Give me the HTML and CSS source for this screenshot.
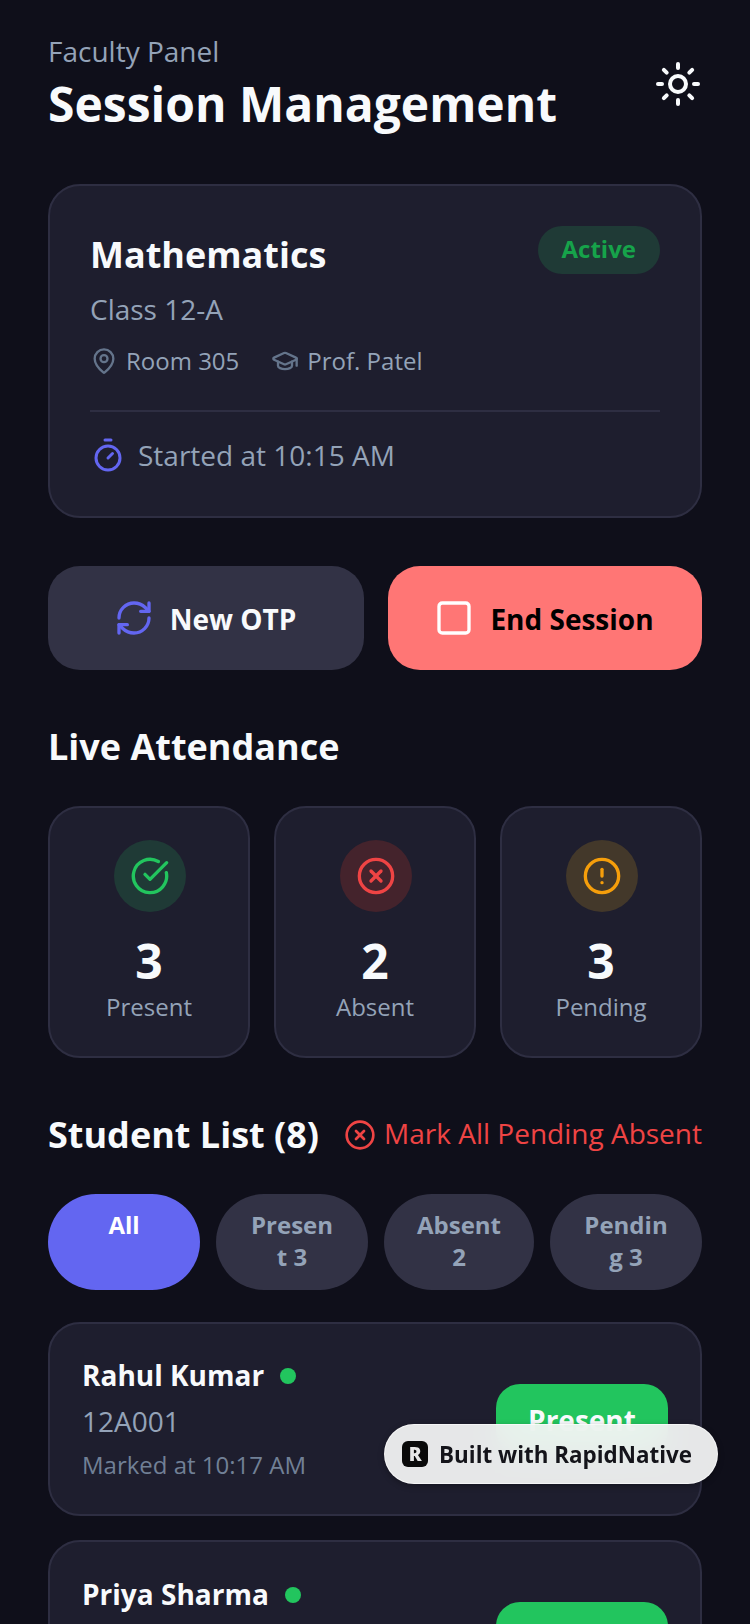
FILE: index.html
```html
<!DOCTYPE html>
<html lang="en">
    <head>
        <meta charset="UTF-8">
        <meta name="viewport" content="width=device-width, initial-scale=1.0">
        <title>Session Management</title>
        <link rel="stylesheet" href="styles.css">
    </head>
    <body>
        <div id="container">
            <div class="header">
                <div>
                    <div class="eyebrow">Faculty Panel</div>
                    <h1 class="title">Session Management</h1>
                </div>
                <svg class="icon sun" viewBox="0 0 24 24"><circle cx="12" cy="12" r="4"/><path d="M12 2v2"/><path d="M12 20v2"/><path d="m4.93 4.93 1.41 1.41"/><path d="m17.66 17.66 1.41 1.41"/><path d="M2 12h2"/><path d="M20 12h2"/><path d="m6.34 17.66-1.41 1.41"/><path d="m19.07 4.93-1.41 1.41"/></svg>
            </div>

            <div class="card session">
                <div class="session_top">
                    <div class="subject">Mathematics</div>
                    <div class="active_tag">Active</div>
                </div>
                <div class="class_name">Class 12-A</div>
                <div class="meta">
                    <div class="meta_item">
                        <svg class="icon meta_icon" viewBox="0 0 24 24"><path d="M20 10c0 4.993-5.539 10.193-7.399 11.799a1 1 0 0 1-1.202 0C9.539 20.193 4 14.993 4 10a8 8 0 0 1 16 0"/><circle cx="12" cy="10" r="3"/></svg>
                        <span>Room 305</span>
                    </div>
                    <div class="meta_item">
                        <svg class="icon meta_icon" viewBox="0 0 24 24"><path d="M21.42 10.922a1 1 0 0 0-.019-1.838L12.83 5.18a2 2 0 0 0-1.66 0L2.6 9.08a1 1 0 0 0 0 1.832l8.57 3.908a2 2 0 0 0 1.66 0z"/><path d="M22 10v6"/><path d="M6 12.5V16a6 3 0 0 0 12 0v-3.5"/></svg>
                        <span>Prof. Patel</span>
                    </div>
                </div>
                <div class="started">
                    <svg class="icon timer" viewBox="0 0 24 24"><path d="M10 2h4"/><path d="m12 14 3-3"/><circle cx="12" cy="14" r="8"/></svg>
                    <span>Started at 10:15 AM</span>
                </div>
            </div>

            <div class="actions">
                <div class="action otp">
                    <svg class="icon" viewBox="0 0 24 24"><path d="M3 12a9 9 0 0 1 9-9 9.75 9.75 0 0 1 6.74 2.74L21 8"/><path d="M21 3v5h-5"/><path d="M21 12a9 9 0 0 1-9 9 9.75 9.75 0 0 1-6.74-2.74L3 16"/><path d="M8 16H3v5"/></svg>
                    <span>New OTP</span>
                </div>
                <div class="action end">
                    <svg class="icon" viewBox="0 0 24 24"><rect x="3" y="3" width="18" height="18" rx="2"/></svg>
                    <span>End Session</span>
                </div>
            </div>

            <h2 class="section_title live">Live Attendance</h2>
            <div class="stats">
                <div class="card stat">
                    <div class="stat_circle green_bg">
                        <svg class="icon green" viewBox="0 0 24 24"><path d="M21.801 10A10 10 0 1 1 17 3.335"/><path d="m9 11 3 3L22 4"/></svg>
                    </div>
                    <div class="stat_num">3</div>
                    <div class="stat_label">Present</div>
                </div>
                <div class="card stat">
                    <div class="stat_circle red_bg">
                        <svg class="icon red" viewBox="0 0 24 24"><circle cx="12" cy="12" r="10"/><path d="m15 9-6 6"/><path d="m9 9 6 6"/></svg>
                    </div>
                    <div class="stat_num">2</div>
                    <div class="stat_label">Absent</div>
                </div>
                <div class="card stat">
                    <div class="stat_circle amber_bg">
                        <svg class="icon amber" viewBox="0 0 24 24"><circle cx="12" cy="12" r="10"/><path d="M12 8v4"/><path d="M12 16h.01"/></svg>
                    </div>
                    <div class="stat_num">3</div>
                    <div class="stat_label">Pending</div>
                </div>
            </div>

            <div class="list_head">
                <h2 class="section_title">Student List (8)</h2>
                <div class="mark_all">
                    <svg class="icon red" viewBox="0 0 24 24"><circle cx="12" cy="12" r="10"/><path d="m15 9-6 6"/><path d="m9 9 6 6"/></svg>
                    <span>Mark All Pending Absent</span>
                </div>
            </div>

            <div class="chips">
                <div class="chip chip_on">All</div>
                <div class="chip">Presen<br>t 3</div>
                <div class="chip">Absent<br>2</div>
                <div class="chip">Pendin<br>g 3</div>
            </div>

            <div class="card student">
                <div class="student_info">
                    <div class="student_name"><span>Rahul Kumar</span><i class="dot"></i></div>
                    <div class="roll">12A001</div>
                    <div class="marked">Marked at 10:17 AM</div>
                </div>
                <div class="status_btn">Present</div>
            </div>
            <div class="card student">
                <div class="student_info">
                    <div class="student_name"><span>Priya Sharma</span><i class="dot"></i></div>
                </div>
                <div class="status_btn">Present</div>
            </div>
        </div>

        <div class="built">
            <span class="built_logo">R</span>
            <span>Built with RapidNative</span>
        </div>
    </body>
</html>
```

FILE: styles.css
```css
html, body {
    margin: 0;
    height: 1624px;
    overflow: hidden;
}
body {
    background: #0f0f1a;
    color: #f8fafc;
    font-family: "Open Sans", sans-serif;
}
#container {
    padding: 31px 48px 0;
}
h1, h2 {
    margin: 0;
}
.icon {
    width: 40px;
    height: 40px;
    fill: none;
    stroke: currentColor;
    stroke-width: 2;
    stroke-linecap: round;
    stroke-linejoin: round;
    flex-shrink: 0;
}

.header {
    display: flex;
    justify-content: space-between;
    align-items: center;
}
.eyebrow {
    font-size: 28px;
    line-height: 40px;
    color: #94a3b8;
}
.title {
    font-size: 48px;
    line-height: 64px;
    font-weight: 700;
    margin-top: 1px;
}
.sun {
    width: 48px;
    height: 48px;
}

.card {
    background: #1e1e2e;
    border: 2px solid #2e2e42;
    box-sizing: border-box;
}
.session {
    margin-top: 48px;
    height: 334px;
    border-radius: 32px;
    padding: 38px 40px 0;
}
.session_top {
    display: flex;
    justify-content: space-between;
    align-items: flex-start;
}
.subject {
    font-size: 36px;
    line-height: 56px;
    font-weight: 700;
    margin-top: 3px;
}
.active_tag {
    background: #1f3a36;
    color: #16a34a;
    font-size: 24px;
    line-height: 32px;
    font-weight: 700;
    padding: 7px 24px 9px;
    margin-top: 2px;
    border-radius: 24px;
}
.class_name {
    font-size: 28px;
    line-height: 40px;
    color: #94a3b8;
    margin-top: 6px;
}
.meta {
    display: flex;
    gap: 32px;
    margin-top: 12px;
}
.meta_item {
    display: flex;
    align-items: center;
    gap: 8px;
    font-size: 24px;
    line-height: 40px;
    color: #94a3b8;
}
.meta_icon {
    width: 28px;
    height: 28px;
    color: #64748b;
}
.started {
    display: flex;
    align-items: center;
    gap: 12px;
    font-size: 28px;
    line-height: 40px;
    color: #94a3b8;
    margin-top: 29px;
    padding-top: 23px;
    border-top: 2px solid #2e2e42;
}
.timer {
    width: 36px;
    height: 36px;
    color: #6366f1;
}

.actions {
    display: flex;
    gap: 24px;
    margin-top: 48px;
}
.action {
    flex: 1;
    height: 104px;
    box-sizing: border-box;
    padding-right: 2px;
    border-radius: 32px;
    display: flex;
    align-items: center;
    justify-content: center;
    gap: 16px;
    font-size: 28px;
    font-weight: 700;
}
.action span {
    padding-top: 2px;
}
.otp {
    flex: 0 0 316px;
    background: #323245;
}
.otp .icon {
    color: #6366f1;
}
.end {
    background: #ff7675;
    color: #000;
}
.end .icon {
    color: #fff;
}

.section_title {
    font-size: 36px;
    line-height: 48px;
    font-weight: 700;
}
.live {
    margin-top: 53px;
}
.stats {
    display: flex;
    gap: 24px;
    margin-top: 35px;
}
.stat {
    flex: 1;
    height: 252px;
    border-radius: 32px;
    padding-top: 32px;
    display: flex;
    flex-direction: column;
    align-items: center;
}
.stat_circle {
    width: 72px;
    height: 72px;
    margin-left: 2px;
    border-radius: 50%;
    display: flex;
    align-items: center;
    justify-content: center;
}
.green_bg { background: #1f3a36; }
.red_bg { background: #44232c; }
.amber_bg { background: #43382a; }
.green { color: #22c55e; }
.red { color: #ef4444; }
.amber { color: #f59e0b; }
.stat_num {
    font-size: 48px;
    line-height: 54px;
    font-weight: 700;
    margin-top: 22px;
}
.stat_label {
    font-size: 24px;
    line-height: 36px;
    color: #94a3b8;
    margin-top: 1px;
}

.list_head {
    display: flex;
    justify-content: space-between;
    align-items: center;
    margin-top: 53px;
}
.mark_all {
    display: flex;
    align-items: center;
    gap: 8px;
    color: #ef4444;
    font-size: 28px;
    line-height: 36px;
    margin-bottom: 4px;
}
.mark_all .icon {
    width: 32px;
    height: 32px;
    margin-top: 4px;
}

.chips {
    display: grid;
    grid-template-columns: 152px 152px 150px 152px;
    gap: 16px;
    margin-top: 35px;
}
.chip {
    background: #323245;
    color: #94a3b8;
    border-radius: 48px;
    padding: 15px 0;
    height: 96px;
    box-sizing: border-box;
    text-align: center;
    font-size: 24px;
    line-height: 32px;
    font-weight: 700;
}
.chip_on {
    background: #6366f1;
    color: #fff;
}

.student {
    margin-top: 24px;
    height: 194px;
    border-radius: 32px;
    padding: 0 32px;
    display: flex;
    align-items: center;
    justify-content: space-between;
}
.chips + .student {
    margin-top: 32px;
}
.student + .student {
    align-items: flex-start;
    padding-top: 32px;
}
.student + .student .status_btn {
    margin-top: 28px;
}
.student_name {
    display: flex;
    align-items: center;
    gap: 16px;
    font-size: 28px;
    line-height: 40px;
    font-weight: 700;
}
.dot {
    width: 16px;
    height: 16px;
    margin-top: 2px;
    border-radius: 50%;
    background: #22c55e;
}
.roll {
    font-size: 28px;
    line-height: 40px;
    color: #94a3b8;
    margin-top: 6px;
}
.marked {
    font-size: 24px;
    line-height: 36px;
    color: #718096;
    margin-top: 6px;
}
.status_btn {
    background: #22c55e;
    width: 172px;
    height: 70px;
    box-sizing: border-box;
    padding-top: 2px;
    border-radius: 24px;
    display: flex;
    align-items: center;
    justify-content: center;
    font-size: 28px;
    font-weight: 700;
}

.built {
    position: fixed;
    right: 32px;
    top: 1424px;
    height: 60px;
    box-sizing: border-box;
    padding: 0 25px 0 17px;
    border-radius: 30px;
    display: flex;
    align-items: center;
    gap: 11px;
    background: rgba(243, 244, 244, 0.94);
    border: 1px solid rgba(255, 255, 255, 0.6);
    backdrop-filter: blur(12px);
    box-shadow: 0 2px 6px rgba(0, 0, 0, 0.3);
    color: #14141a;
    font-size: 22.4px;
    font-weight: 700;
}
.built_logo {
    width: 26px;
    height: 26px;
    border-radius: 6px;
    background: #0a0a0a;
    color: #e8e8e8;
    display: flex;
    align-items: center;
    justify-content: center;
    font-size: 19px;
    font-weight: 800;
}
```
